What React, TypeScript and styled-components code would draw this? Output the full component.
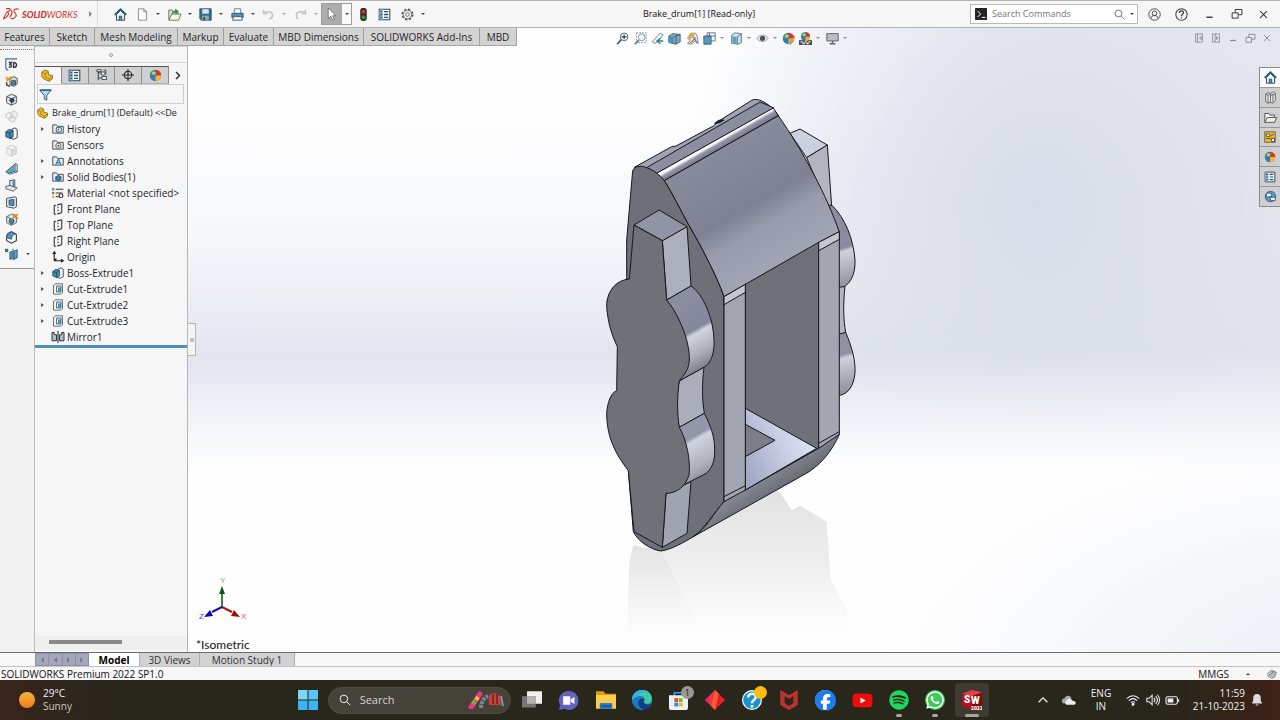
import React, { ReactNode, useState } from "react";
import styled, { createGlobalStyle, css } from "styled-components";
import { FaFacebook, FaSpotify, FaWhatsapp, FaYoutube } from "react-icons/fa6";

const GlobalStyle = createGlobalStyle`
  *, *::before, *::after { box-sizing: border-box; }
  body {
    margin: 0;
    background: #f6f6f6;
    color: #262626;
    font-family: "Open Sans", "Noto Sans", sans-serif;
    font-size: 10px;
    line-height: 16px;
  }
  button, input {
    font: inherit;
    color: inherit;
    background: none;
    border: 0;
    padding: 0;
    margin: 0;
  }
  ul { list-style: none; margin: 0; padding: 0; }
`;

/* ---------- icons ---------- */

const Svg = styled.svg<{ $size: number }>`
  display: block;
  flex: none;
  width: ${(p) => p.$size}px;
  height: ${(p) => p.$size}px;
  overflow: visible;
`;

type IconName =
  | "home" | "new" | "open" | "save" | "print" | "undo" | "redo" | "cursor" | "traffic" | "list" | "gear"
  | "search" | "user" | "help" | "minimize" | "restore" | "close" | "dockLeft" | "dockRight" | "terminal"
  | "zoomFit" | "zoomArea" | "prevView" | "section" | "dynamic" | "orient" | "display" | "eye" | "ball" | "brushBall" | "scene" | "monitor"
  | "three" | "sketchCube" | "hole" | "ghostCubes" | "extrude" | "ghostCube" | "rib" | "draft" | "shell" | "wizard" | "fillet" | "mirrorFeat"
  | "part" | "tree" | "target" | "filter" | "history" | "sensors" | "annotations" | "bodies" | "material" | "plane" | "origin" | "cut" | "mirror"
  | "library" | "folder" | "palette" | "forum" | "tag"
  | "start" | "taskview" | "chat" | "explorer" | "edge" | "store" | "diamond" | "quick" | "mcafee" | "solidworks"
  | "chevronUp" | "cloud" | "wifi" | "volume" | "battery" | "bell";

const dark = { stroke: "#3c4650", fill: "none", strokeWidth: 1.2 } as const;

const folderBase = (
  <path d="M1 13.5V2.5h5l1.500 2H15v9z" fill="#ececec" stroke="#46505a" strokeWidth="1.300" />
);

const ball = (
  <>
    <circle cx="8" cy="8" r="7" fill="#3577c4" />
    <path d="M8 8V1a7 7 0 0 0-7 7z" fill="#3f9a4e" />
    <path d="M8 8V1a7 7 0 0 1 7 7z" fill="#d8342c" />
    <path d="M8 8h7a7 7 0 0 1-7 7z" fill="#f0b92c" />
    <ellipse cx="6" cy="5" rx="2.500" ry="2" fill="#fff" opacity=".55" />
  </>
);

const cubeOutline = (
  <path d="M2 4.500 8 1.500l6 2.500v8L8 15l-6-3zM2 4.500 8 7l6-3M8 7v8" />
);

const icons: Record<IconName, ReactNode> = {
  home: (
    <>
      <path d="M3 8v7h10V8L8 3z" fill="#eef3f6" stroke="#33414c" strokeWidth="1.200" />
      <path d="M6.500 15v-5h3v5" fill="#4e90b0" stroke="#33414c" />
      <path d="M.8 8.500 8 1.500l7.200 7" fill="none" stroke="#255d7d" strokeWidth="2.200" />
    </>
  ),
  new: <path d="M3 1h6.500L13 4.500V15H3zM9.500 1v3.500H13" fill="#fdfdfd" stroke="#7b7b7b" />,
  open: (
    <>
      <path d="M1 14V2.500h4l1.500 2H12V14z" fill="#efe9cf" stroke="#5a5a4c" />
      <path d="M1 15 4.500 7.500H16L13 15z" fill="#f7f7ee" stroke="#5a5a4c" />
      <path d="M4 9C4 5 6 3 9 3V.5l4.500 4L9 8V5.500C7 5.500 5 6.500 4 9z" fill="#3f8a3c" />
    </>
  ),
  save: (
    <>
      <path d="M1 1h14v14H3l-2-2z" fill="#2f6f94" stroke="#2b4656" />
      <path d="M4 1.500h8V7H4z" fill="#dbe7ee" />
      <path d="M4 9.500h8V15H4z" fill="#9aa7af" />
      <path d="M5.500 11h2v4h-2z" fill="#24485c" />
    </>
  ),
  print: (
    <>
      <path d="M4 1h8v6H4z" fill="#fff" stroke="#55616b" />
      <path d="M1 6.500h14v5H1z" fill="#4f95b7" stroke="#27536b" />
      <path d="M3 10.500h10l1 4.500H2z" fill="#f3f5f6" stroke="#3f4b54" />
    </>
  ),
  undo: <path d="M2 2v5h5M2.500 6.500C6 3 13 4 13 9c0 2.500-2 4-4 4.500" fill="none" stroke="#c6c6c6" strokeWidth="2" />,
  redo: <path d="M14 2v5H9M13.500 6.500C10 3 3 4 3 9c0 2.500 1 4 2 4.500" fill="none" stroke="#c6c6c6" strokeWidth="2" />,
  cursor: <path d="M4 0v13l3.200-2.700L9.500 15l2-1-2.200-4.500h4.200z" fill="#fff" stroke="#555" strokeWidth=".8" />,
  traffic: (
    <>
      <rect x="4" y="0" width="8" height="16" rx="3" fill="#2d2a28" />
      <circle cx="8" cy="4.500" r="2.500" fill="#d8342c" />
      <circle cx="8" cy="11.500" r="2.500" fill="#2f9a43" />
    </>
  ),
  list: (
    <>
      <path d="M1.500 1.500h13v13h-13z" fill="#fbfdfe" stroke="#2f4453" strokeWidth="1.300" />
      <path d="M2 2h4v12H2z" fill="#8cbcd3" />
      <path d="M3 4.500h2M3 8h2M3 11.500h2M7.500 4.500h5M7.500 8h5M7.500 11.500h5" stroke="#24506b" strokeWidth="1.600" />
    </>
  ),
  gear: (
    <>
      <circle cx="8" cy="8" r="6.500" fill="none" stroke="#555" strokeWidth="1.800" strokeDasharray="2.900 2.200" />
      <circle cx="8" cy="8" r="5.200" fill="#f6f6f6" stroke="#555" />
      <circle cx="8" cy="8" r="2.300" fill="none" stroke="#555" />
    </>
  ),
  search: <path d="M10.500 10.500 15 15M6.500 1.500a5 5 0 1 0 0 10 5 5 0 0 0 0-10z" fill="none" stroke="currentColor" strokeWidth="1.300" />,
  user: (
    <g fill="none" stroke="#4a4a4a" strokeWidth="1.200">
      <circle cx="8" cy="8" r="7" />
      <circle cx="8" cy="6.500" r="2.800" />
      <path d="M3.500 13c.5-3 2-3.700 4.500-3.700s4 .7 4.500 3.700" />
    </g>
  ),
  help: (
    <g fill="none" stroke="#3c3c3c" strokeWidth="1.300">
      <circle cx="8" cy="8" r="7" />
      <path d="M5.500 6.200c0-3.600 5-3.400 5-.4 0 2-2.500 2-2.500 4.200M8 11.300v1.400" strokeWidth="1.500" />
    </g>
  ),
  minimize: <path d="M3.500 12h9" stroke="currentColor" strokeWidth="2" />,
  restore: <path d="M1.500 6.500h8v7h-8zM5.500 6V2h9v7h-4.500" fill="none" stroke="currentColor" strokeWidth="1.300" />,
  close: <path d="m2 2 12 12M14 2 2 14" stroke="currentColor" strokeWidth="1.800" />,
  dockLeft: <path d="M2.500 1.500h11v13h-11zM5.500 1.500v13M11.500 5.500 8.500 8l3 2.500z" fill="none" stroke="currentColor" strokeWidth="1.300" />,
  dockRight: <path d="M2.500 1.500h11v13h-11zM6.500 1.500v13M8.500 5.500l3 2.500-3 2.500z" fill="none" stroke="currentColor" strokeWidth="1.300" />,
  terminal: (
    <>
      <rect width="16" height="16" rx="1" fill="#252525" />
      <path d="m3.500 4 4 4-4 4M9 12.500h5" fill="none" stroke="#fff" strokeWidth="1.300" />
    </>
  ),
  zoomFit: (
    <>
      <circle cx="10" cy="6" r="4.700" fill="#f3f7fa" stroke="#5d6a75" strokeWidth="1.200" />
      <path d="M10 3v6M7 6h6" stroke="#2b3a46" strokeWidth="1.300" />
      <path d="m6.500 9.500-5 5.500" stroke="#39657e" strokeWidth="2.200" />
    </>
  ),
  zoomArea: (
    <>
      <path d="M3 1h12v12H3z" fill="none" stroke="#6f7a83" strokeDasharray="2 1.500" />
      <circle cx="9.500" cy="6.500" r="4.200" fill="#f0f4f7" stroke="#8b969f" strokeWidth="1.200" />
      <path d="m6 10-5 5" stroke="#56809a" strokeWidth="2" />
    </>
  ),
  prevView: (
    <>
      <path d="M1.500 12 11 1.500l4 2L9 11l-4 3z" fill="#eef1f3" stroke="#6b757d" />
      <path d="M15 11H8.500m3-3-4 3 4 3.500" fill="none" stroke="#2f7ca2" strokeWidth="1.800" />
    </>
  ),
  section: (
    <>
      <path d="M1 5 6 2l9 1v9l-5 3-9-2z" fill="#85a9bd" stroke="#36505f" />
      <path d="M1 5l6 1v8l-6-1z" fill="#4c93b8" />
      <path d="M10 6v9M7 6l8-3" stroke="#36505f" />
    </>
  ),
  dynamic: (
    <>
      <path d="M2 8 6 1.500h6L14 6l1 8-4-3-4 4-5-1 3-4z" fill="#eceded" stroke="#7b7267" />
      <path d="M4 6 6 1.500h5L9 6l-5 4z" fill="#eda438" />
      <path d="m9 6 5 8M12 7l-7 7" stroke="#6f7f8a" strokeWidth="1.500" />
    </>
  ),
  orient: (
    <>
      <path d="M5 1h10v10H5z" fill="#f4f7f9" stroke="#51606b" />
      <path d="M8 1v10M5 5h10" stroke="#51606b" />
      <path d="M1 5h9v10H1z" fill="#569abb" stroke="#2c5a73" />
    </>
  ),
  display: (
    <>
      <path d="M2 4 6 1l8 1v11l-4 2-8-1z" fill="#cfe0e9" stroke="#466273" />
      <path d="M3 5l5 1v8l-5-1z" fill="#5ca2c3" />
      <path d="M9 6v9M9 6l5-3.500" stroke="#466273" />
    </>
  ),
  eye: (
    <>
      <path d="M1 8c3-5.500 11-5.500 14 0-3 5-11 5-14 0z" fill="#e6e8ea" stroke="#9a9fa4" />
      <circle cx="8" cy="7.800" r="3.200" fill="#4a545c" />
    </>
  ),
  ball,
  brushBall: (
    <>
      {ball}
      <path d="m10 15.500 5-7 .5-3.500-4 4z" fill="#d6b27b" stroke="#8a704a" strokeWidth=".6" />
    </>
  ),
  scene: (
    <>
      <path d="M0 10h16v6H0z" fill="#4a4a4a" />
      <path d="M2 11h2v2H2zM7 11h2v2H7zM12 11h2v2h-2zM4 13h3v2H4zM9 13h3v2H9z" fill="#e8e8e8" />
      <g transform="translate(1.600 -.5) scale(.8)">{ball}</g>
    </>
  ),
  monitor: (
    <>
      <path d="M1 2h14v9H1z" fill="#b7bdc6" stroke="#5c626b" strokeWidth="1.200" />
      <path d="M8 11v3M4.500 14.500h7" stroke="#5c626b" strokeWidth="1.800" />
    </>
  ),
  three: (
    <>
      <path d="M15 1H1v10c0 2.500 1 4 3 4" fill="none" stroke="#2c759c" strokeWidth="1.400" />
      <path d="M4.500 5.500h3.500L6 8c3 0 2.500 4-1.500 3M10.500 5.500v6c5 0 5-6 0-6" fill="none" stroke="#333" strokeWidth="1.700" />
    </>
  ),
  sketchCube: (
    <>
      <path d="M6 4 11 2l4 2v7l-4 3-5-2z" fill="#cddbe3" stroke="#3c4650" />
      <path d="M8 7h5v5H8z" fill="#3f86a8" stroke="#24485c" />
      <path d="m1 2 7 6M7 2 2 8M1 5h7" stroke="#e39a1d" strokeWidth="1.600" />
      <path d="M2 9v3l4 2" stroke="#333" fill="none" strokeWidth="1.600" />
    </>
  ),
  hole: (
    <>
      <g fill="#dfe3e5" stroke="#555c62" strokeWidth="1.200">{cubeOutline}</g>
      <circle cx="8.500" cy="9" r="3" fill="#333c43" />
    </>
  ),
  ghostCubes: (
    <g fill="#efefef" stroke="#c3c3c3">
      <path d="M1 5l4-2 4 2v4l-4 2-4-2zM7 3l4-2 4 2v5l-4 2-4-2zM5 10l4-2 4 2v3l-4 2-4-2z" />
    </g>
  ),
  extrude: (
    <>
      <path d="M8 3 12 1l3 2v10l-4 2-4-1z" {...dark} fill="#f4f6f7" />
      <path d="M1 6 5 3l5 1.500V12l-4 2-5-2z" fill="#3f8db3" stroke="#1f4456" />
      <path d="M1 6l5 1.500V14M6 7.500l4-3" fill="none" stroke="#1f4456" />
    </>
  ),
  ghostCube: (
    <>
      <g fill="#f0f0f0" stroke="#c9c9c9">{cubeOutline}</g>
      <circle cx="11" cy="10" r="2.500" fill="#e3e3e3" stroke="#c9c9c9" />
    </>
  ),
  rib: (
    <>
      <path d="M1 12 13 2v9l-9 3z" fill="#62a5c4" stroke="#26485a" />
      <path d="m13 2 2 1v9l-2-1M4 14l2 1 9-3" fill="#e6ecef" stroke="#26485a" />
    </>
  ),
  draft: (
    <>
      <path d="M6 2l6-1v9l-6 1z" {...dark} fill="#eef2f4" />
      <path d="M9 3l3-2v9l-3 1z" fill="#4f95b7" />
      <path d="M1 9l5-1 9 3-5 4-9-3z" fill="#dfe5e9" stroke="#3c4650" />
    </>
  ),
  shell: (
    <>
      <path d="M2 3l10-2 2 1v11l-3 2-9-2z" fill="#f1f4f5" stroke="#3c4650" strokeWidth="1.200" />
      <path d="M5 5l6-1v8l-6-1z" fill="#4a90b4" stroke="#24485c" />
    </>
  ),
  wizard: (
    <>
      <g fill="#dde3e6" stroke="#4a5259">{cubeOutline}</g>
      <circle cx="8" cy="10" r="3" fill="#3f86a8" stroke="#24485c" />
      <path d="m8 8 5-6M10 1l2 2 3-1-1 3 2 2" stroke="#e8891a" strokeWidth="1.600" fill="none" />
    </>
  ),
  fillet: (
    <>
      <path d="M2 8c0-4 2-6 6-7l6 3v8l-6 3-6-3z" fill="#f4f6f7" stroke="#2e3a43" strokeWidth="1.300" />
      <path d="M2 8c0-4 2-6 6-7l5 2.500C9.500 4.500 8 6.500 8 10z" fill="#4c95b9" stroke="#24485c" />
    </>
  ),
  mirrorFeat: (
    <>
      <path d="M6 5l3-1v9l-3 1zM11 4l4-2v10l-4 2z" fill="#62a5c4" stroke="#26485a" />
      <path d="M10 1v14" stroke="#2a78a5" strokeWidth="1.400" />
      <path d="M0 1h4v4H0z" fill="#2a78a5" />
    </>
  ),
  part: (
    <>
      <path d="M1 4 5 1l4 2v4l5 1v4l-4 3-7-3-2-3z" fill="#f2be2b" stroke="#7d5d0b" />
      <path d="M1 4l4 2 4-3M5 6v4l5 2 4-3M10 12v3" fill="none" stroke="#9c7410" />
    </>
  ),
  tree: (
    <g {...dark}>
      <path d="M3 15V1M3 5h5M3 12h5" strokeWidth="1.500" />
      <path d="M1 1h6v2.500H1zM7 4h5v4H7zM8 10h6v4H8z" fill="#f6f6f6" />
      <path d="M10 1.500h3v6" />
    </g>
  ),
  target: (
    <g fill="none" stroke="#222" strokeWidth="1.400">
      <circle cx="8" cy="8" r="5" />
      <path d="M8 0v16M0 8h16" />
    </g>
  ),
  filter: (
    <>
      <path d="M1 3h14L9.500 9v6l-3-1.500V9z" fill="#b9d4e2" stroke="#2c5a73" strokeWidth="1.200" />
      <path d="M1 2.500h14" stroke="#2a6b91" strokeWidth="2" />
    </>
  ),
  history: (
    <>
      {folderBase}
      <circle cx="9" cy="9" r="3.500" fill="#fff" stroke="#2f7ca2" strokeWidth="1.400" />
      <path d="M9 7v2.500H7" fill="none" stroke="#333" />
    </>
  ),
  sensors: (
    <>
      {folderBase}
      <circle cx="8.500" cy="9" r="3.500" fill="#fff" stroke="#6e3f4b" strokeWidth="1.200" />
      <circle cx="8.500" cy="9" r="1.300" fill="#333" />
    </>
  ),
  annotations: (
    <>
      {folderBase}
      <path d="M5 13 8.500 5.500 12 13M6 10.500h5" fill="none" stroke="#2a78a5" strokeWidth="1.500" />
    </>
  ),
  bodies: (
    <>
      {folderBase}
      <path d="M5 7.500 8.500 6l3.500 1.500v4L8.500 13 5 11.500z" fill="#2f86ae" stroke="#1f4456" />
    </>
  ),
  material: (
    <>
      <path d="M5 3h10M5 8h9M5 13h5" stroke="#333" strokeWidth="1.500" />
      <path d="M0 1.500h3v3H0z" fill="#3f9a4e" />
      <path d="M0 6.500h3v3H0z" fill="#777" />
      <path d="M0 11.500h3v3H0z" fill="#e5b527" />
      <circle cx="12" cy="11.500" r="2.500" fill="#fff" stroke="#333" strokeWidth="1.500" />
    </>
  ),
  plane: (
    <g fill="none" stroke="#2c2c2c" strokeWidth="1.400">
      <path d="M3 3v12M3 15h2.500M3 3h2.500M13 1v12" />
      <path d="M7 2.500 13 1M7 14.500 13 13M8 5v2M8 9v2" />
    </g>
  ),
  origin: <path d="M3 1v12h12M1 4l2-3 2 3M12 11l3 2-3 2M3 13l3-3" fill="none" stroke="#222" strokeWidth="1.500" />,
  cut: (
    <>
      <path d="M2 3l3-2h9v12l-3 2H2z" fill="#f2f4f5" stroke="#5a636b" strokeWidth="1.200" />
      <path d="M6 4h6v8H6z" fill="#dbe8ee" stroke="#2c4a5a" />
      <path d="M8 6h4v6H8z" fill="#4a93b6" />
    </>
  ),
  mirror: (
    <>
      <path d="M0 2v11h6V5H3V2zM16 2v11h-6V5h3V2z" fill="#a8c3d1" stroke="#222" strokeWidth="1.200" />
      <path d="M8 0v16" stroke="#222" strokeWidth="1.400" />
    </>
  ),
  library: (
    <path d="M2 4l3-2 3 1 3-2 3 2v9l-3 3-3-1-3 1-3-2zM2 4l3 1v10M5 5l3-2v11M8 6l3-2v10M11 5l3-2" fill="#e6e6e6" stroke="#555" />
  ),
  folder: <path d="M1 14V3h5l1.500 2H13v3h2.500L13 14zM1 14l3-6h9" fill="#f0f0ea" stroke="#555" strokeWidth="1.200" />,
  palette: (
    <>
      <path d="M1 1h14v14H1z" fill="#e7b93c" stroke="#5a4a1b" />
      <path d="M3 4h5v3H3zM3 10h6M9 7l4-3M10 10h4v4h-4z" fill="#fff" stroke="#3d3310" />
    </>
  ),
  forum: (
    <>
      <circle cx="8" cy="8" r="6.500" fill="#5b97c8" stroke="#28588a" />
      <path d="M3 4h6v4H6L4 10V8H3zM8 9h6v4H8z" fill="#eaf3f9" stroke="#28445a" strokeWidth=".8" />
    </>
  ),
  tag: (
    <>
      <path d="M1 7 7 2l8 3-2 7-5 3-6-3z" fill="#d8d8d8" stroke="#555" />
      <path d="m3 8 8 5M5 6l8 4M7 4l7 3M3 11l8-8" stroke="#666" />
    </>
  ),
  start: (
    <g fill="#3cb4f4">
      <path d="M0 0h7.600v7.600H0z" fill="#7fd4fb" />
      <path d="M8.400 0H16v7.600H8.400z" fill="#58c4f8" />
      <path d="M0 8.400h7.600V16H0zM8.400 8.400H16V16H8.400z" />
    </g>
  ),
  taskview: (
    <>
      <path d="M4 1h12v10H4z" fill="#efefef" />
      <path d="M0 5h11v9H0z" fill="#77756f" />
      <path d="M4 5h7v6H4z" fill="#b5b4b0" />
    </>
  ),
  chat: (
    <>
      <path d="M8 0a8 8 0 1 1-3.500 15L0 16l1-4A8 8 0 0 1 8 0z" fill="#6263c0" />
      <path d="M3.500 4.500h6v7h-6zM10 7l3-2v6l-3-2z" fill="#fff" />
    </>
  ),
  explorer: (
    <>
      <path d="M0 1h6l1.500 2H16v4H0z" fill="#e29a16" />
      <path d="M0 4h16v11H0z" fill="#fbcf4d" />
      <path d="M3 10.500h10V15H3z" fill="#1f76c9" />
      <path d="M4.500 13h7" stroke="#0f4f91" />
    </>
  ),
  edge: (
    <>
      <circle cx="8" cy="8" r="8" fill="#1b77cc" />
      <path d="M0 8C0 3 4 0 8 0c5 0 8 3.500 8 7 0 3-2 4-4 4-2.500 0-3-1.200-2.400-2C10.500 7.500 9.500 5 6.500 5 3 5 1 6.500 0 8z" fill="#3ec9a7" />
      <path d="M0 8C0 3 4 0 8 0c2 0 4 .6 5.500 2C9 1 5 3 3.500 5.600 2 6 1 6.800 0 8z" fill="#35b3e6" />
      <path d="M6 7.500C4 9 5 14 9 15.700 5 16.500 1 13 .2 9.500 1 6 4 5 6.500 5 8.500 5 9.800 6 10 7.200 8.500 6.500 7 6.700 6 7.500z" fill="#1b77cc" />
      <path d="M6 7.500c1-.8 2.500-1 4-.3.200 1-.6 1.500-.6 2.300 0 2 3.600 2.500 5.600 1.500-1 2.500-3.500 4.800-6 4.700C5 14 4 9 6 7.500z" fill="#12407f" />
    </>
  ),
  store: (
    <>
      <path d="M4.500 4V1.500h7V4" fill="none" stroke="#3aa0dc" strokeWidth="1.400" />
      <path d="M0 3.500h16V14c0 1-.8 2-2 2H2c-1.200 0-2-1-2-2z" fill="#eef2f5" />
      <path d="M4.500 6h3.200v3.200H4.500z" fill="#e5502a" />
      <path d="M8.300 6h3.200v3.200H8.300z" fill="#7cb82f" />
      <path d="M4.500 9.800h3.200V13H4.500z" fill="#1d9be0" />
      <path d="M8.300 9.800h3.200V13H8.300z" fill="#f8b61b" />
    </>
  ),
  diamond: (
    <>
      <path d="M8 0 0 8l8 8z" fill="#f0363f" />
      <path d="m8 0 8 8-8 8z" fill="#e2202a" />
      <path d="m8 0 3 3-3 13-3-3z" fill="#fb5a2c" />
      <path d="m0 8 3-3v6z" fill="#e5178f" />
    </>
  ),
  quick: (
    <>
      <circle cx="8" cy="8" r="8" fill="#fff" />
      <circle cx="8" cy="8" r="7" fill="#1793d1" />
      <path d="M5 6c0-4 6-4 6-.5C11 8 8 8 8 10.500M8 12v2" fill="none" stroke="#fff" strokeWidth="2" />
    </>
  ),
  mcafee: <path d="M1 0l7 4 7-4v12l-7 4-7-4zM4.500 5v5.500L8 12.500l3.500-2V5L8 7z" fill="#bf3131" fillRule="evenodd" />,
  solidworks: (
    <>
      <path d="M0 3 8 0l8 2v11l-8 3-8-3z" fill="#b1121b" />
      <path d="M0 3 8 0l8 2-8 3z" fill="#e2414a" />
      <path d="M8 5v11l8-3V2z" fill="#7d0b12" />
    </>
  ),
  chevronUp: <path d="m3 10.500 5-5 5 5" fill="none" stroke="#e8e8e8" strokeWidth="1.500" />,
  cloud: (
    <>
      <path d="M3 12a3 3 0 0 1 0-6c1-4 7-4 8 0z" fill="#a9a9a9" />
      <path d="M5 13.500a3 3 0 0 1 0-5c2-3 6-2 7 .3 5 0 4.500 4.700 1 4.700z" fill="#f0f0f0" />
    </>
  ),
  wifi: (
    <g fill="none" stroke="#eee" strokeWidth="1.300">
      <path d="M1 6.500c4-4.500 10-4.500 14 0M3.300 8.800c3-3 6.400-3 9.400 0M5.700 11c1.500-1.300 3.100-1.300 4.600 0" />
      <circle cx="8" cy="13" r="1" fill="#eee" />
    </g>
  ),
  volume: (
    <path d="M1 6h2.500L7 2.500v11L3.500 10H1zM9 5.500c1.500 1.500 1.500 3.500 0 5M11 3.500c2.500 2.700 2.500 6.300 0 9M13 2c3.300 3.500 3.300 8.500 0 12" fill="none" stroke="#eee" strokeWidth="1.200" />
  ),
  battery: (
    <>
      <rect x="0" y="3.500" width="14" height="9" rx="2" fill="none" stroke="#eee" strokeWidth="1.300" />
      <path d="M2 5.500h7v5H2z" fill="#eee" />
      <path d="M15.500 6.500v3" stroke="#eee" strokeWidth="1.500" />
    </>
  ),
  bell: <path d="M8 0c3.500 0 5 2.500 5 5v4l2 3.500H1L3 9V5c0-2.500 1.500-5 5-5zM6 14h4c-.5 2-3.500 2-4 0z" fill="#dcdcdc" />,
};

const Icon = ({ name, size = 12 }: { name: IconName; size?: number }) => (
  <Svg $size={size} viewBox="0 0 16 16" aria-hidden="true">
    {icons[name]}
  </Svg>
);

const Caret = styled.span<{ $color?: string; $up?: boolean }>`
  flex: none;
  border: 2px solid transparent;
  ${(p) => (p.$up ? "border-bottom-color" : "border-top-color")}: ${(p) => p.$color ?? "#444"};
  ${(p) => (p.$up ? "border-top" : "border-bottom")}: 0;
`;

/* ---------- title bar ---------- */

const Page = styled.div`
  display: flex;
  flex-direction: column;
  min-height: 100vh;
  overflow: hidden;
`;

const TitleBar = styled.header`
  display: grid;
  grid-template-columns: 428px 1fr auto;
  align-items: center;
  height: 28px;
  background: #f6f6f6;
  border-top: 1px solid #b4b4b4;
  border-bottom: 1px solid #b0b0b0;
`;

const TitleLeft = styled.div`
  display: flex;
  align-items: center;
  height: 26px;
`;

const Brand = styled.div`
  display: flex;
  align-items: center;
  gap: 2px;
  width: 98px;
  height: 26px;
  padding-left: 3px;
  border-right: 1px solid #dcdcdc;
  color: #d5322e;
  font: italic 9px "Lato", sans-serif;
  b { font-weight: 900; }
`;

const BrandArrow = styled.span`
  margin-left: auto;
  margin-right: 5px;
  border: 3px solid transparent;
  border-left-color: #8a8a8a;
  border-right: 0;
`;

const QuickTools = styled.div`
  display: flex;
  align-items: center;
  flex: 1;
  padding-left: 16px;
`;

const Tool = styled.button<{ $w: number; $active?: boolean }>`
  display: flex;
  align-items: center;
  gap: 7px;
  flex: none;
  width: ${(p) => p.$w}px;
  height: 22px;
  ${(p) =>
    p.$active &&
    css`
      padding: 0 3px;
      margin-right: 5px;
      border: 1px solid #9c9c9c;
      background: linear-gradient(to right, #adadad 20px, #fafafa 20px);
    `}
`;

const DocTitle = styled.h1`
  margin: 0;
  text-align: center;
  font-size: 9px;
  font-weight: 400;
  color: #111;
`;

const TitleRight = styled.div`
  display: flex;
  align-items: center;
  padding-right: 12px;
  color: #333;
`;

const SearchBox = styled.label`
  display: flex;
  align-items: center;
  gap: 5px;
  width: 168px;
  height: 20px;
  padding: 0 3px 0 4px;
  margin-right: 10px;
  background: #fff;
  border: 1px solid #b9b9b9;
  color: #666;
  input {
    flex: 1;
    min-width: 0;
    outline: 0;
    font-size: 9px;
  }
  input::placeholder { color: #777; opacity: 1; }
`;

const IconButton = styled.button<{ $gap?: number }>`
  display: grid;
  place-items: center;
  margin-left: ${(p) => p.$gap ?? 0}px;
`;

const DassaultMark = () => (
  <svg width="17" height="14" viewBox="0 0 54 42" fill="none" stroke="#d5322e" strokeWidth="3.500" aria-hidden="true">
    <path d="M10 4h10c6 0 3 7-7 11 9 2 5 14-11 21 2-8 5-13 9-17" />
    <path d="M50 6c-8-3-17 0-15 7 2 5 10 8 6 16-4 6-12 8-18 5" />
    <path d="M27 8c3 8 1 16-6 22" />
  </svg>
);

const quickTools: { icon: IconName; w: number; caret?: "dark" | "pale"; active?: boolean; label: string }[] = [
  { icon: "home", w: 22, label: "Home" },
  { icon: "new", w: 32, caret: "dark", label: "New" },
  { icon: "open", w: 31, caret: "dark", label: "Open" },
  { icon: "save", w: 32, caret: "dark", label: "Save" },
  { icon: "print", w: 31, caret: "dark", label: "Print" },
  { icon: "undo", w: 32, caret: "pale", label: "Undo" },
  { icon: "redo", w: 27, caret: "pale", label: "Redo" },
  { icon: "cursor", w: 31, caret: "dark", active: true, label: "Select" },
  { icon: "traffic", w: 21, label: "Rebuild" },
  { icon: "list", w: 23, label: "File properties" },
  { icon: "gear", w: 26, caret: "dark", label: "Options" },
];

/* ---------- workspace ---------- */

const Workspace = styled.main`
  flex: 1;
  display: flex;
  flex-direction: column;
  background:
    radial-gradient(ellipse 40% 40% at 108% 104%, #eceef5 0%, rgba(240, 241, 247, 0) 100%),
    linear-gradient(to bottom, transparent 52%, rgba(255, 255, 255, 0.4) 60%, #fefefe 71%),
    radial-gradient(ellipse 28% 66% at 81% 28%, #d8dce8 0%, rgba(218, 222, 234, 0.75) 40%, rgba(227, 230, 239, 0) 100%),
    linear-gradient(to right, rgba(226, 229, 238, 0) 70%, rgba(226, 229, 238, 0.8) 100%),
    linear-gradient(to bottom, #fefefe 12%, #f6f7fa 34%, #dfe3ed 55%, #e4e7f0 62%);
`;

const CommandRow = styled.div`
  display: flex;
  align-items: flex-start;
  height: 18px;
`;

const CommandTabs = styled.nav`
  display: flex;
  height: 18px;
  background: #d3d3d3;
  border-bottom: 1px solid #a6a6a6;
`;

const CommandTab = styled.button<{ $w: number }>`
  width: ${(p) => p.$w}px;
  white-space: nowrap;
  line-height: 16px;
  border-right: 1px solid #a0a0a0;
`;

const commandTabs: [string, number][] = [
  ["Features", 50], ["Sketch", 45], ["Mesh Modeling", 83], ["Markup", 46], ["Evaluate", 50],
  ["MBD Dimensions", 90], ["SOLIDWORKS Add-Ins", 116], ["MBD", 37],
];

const ViewTools = styled.div`
  display: flex;
  align-items: center;
  height: 20px;
  margin-left: 99px;
`;

const ViewTool = styled.button<{ $w: number }>`
  display: flex;
  align-items: center;
  gap: 4px;
  width: ${(p) => p.$w}px;
`;

const viewTools: [IconName, number, boolean, string][] = [
  ["zoomFit", 18, false, "Zoom to fit"], ["zoomArea", 17, false, "Zoom to area"], ["prevView", 17, false, "Previous view"],
  ["section", 18, false, "Section view"], ["dynamic", 17, false, "Dynamic annotation"], ["orient", 27, true, "View orientation"],
  ["display", 26, true, "Display style"], ["eye", 26, true, "Hide and show items"], ["brushBall", 17, false, "Edit appearance"],
  ["scene", 27, true, "Apply scene"], ["monitor", 26, true, "View settings"],
];

const DocControls = styled.div`
  display: flex;
  align-items: center;
  gap: 7px;
  height: 20px;
  margin-left: auto;
  padding-right: 9px;
  color: #84888f;
`;

const WorkRow = styled.div`
  flex: 1;
  display: flex;
  min-height: 0;
`;

const SideColumn = styled.aside`
  width: 35px;
  background: #f2f2f2;
  border-right: 1px solid #bcbcbc;
`;

const SideTools = styled.div`
  display: flex;
  flex-direction: column;
  height: 220px;
  padding: 6px 5px 5px;
  margin-top: 3px;
  background: #f6f6f6;
  border-top: 1px dotted #777;
  border-bottom: 1px solid #9a9096;
`;

const SideTool = styled.button`
  display: flex;
  align-items: center;
  justify-content: space-between;
  flex: 1;
  margin-right: -1px;
`;

const sideTools: IconName[] = [
  "three", "sketchCube", "hole", "ghostCubes", "extrude", "ghostCube", "rib", "draft", "shell", "wizard", "fillet", "mirrorFeat",
];

const FeaturePanel = styled.section`
  display: flex;
  flex-direction: column;
  width: 153px;
  background: #f6f6f6;
  border-right: 1px solid #b5b5b5;
`;

const gripDot = css`
  &::after {
    content: "";
    width: 4px;
    height: 4px;
    border: 1px solid #999;
    border-radius: 50%;
  }
`;

const Grip = styled.div`
  display: grid;
  place-items: center;
  height: 17px;
  margin-bottom: 3px;
  border-top: 1px solid #d0d0d0;
  border-bottom: 1px solid #d6d6d6;
  ${gripDot}
`;

const PanelTabs = styled.div`
  display: flex;
  height: 18px;
`;

const PanelTab = styled.button<{ $active?: boolean }>`
  display: grid;
  place-items: center;
  width: 27px;
  border-top: 1px solid #555;
  border-right: 1px solid #8d8d8d;
  border-bottom: 1px solid ${(p) => (p.$active ? "#f6f6f6" : "#b0b0b0")};
  background: ${(p) => (p.$active ? "#f6f6f6" : "#d0d0d0")};
`;

const MoreTabs = styled.button`
  display: grid;
  place-items: center;
  width: 18px;
  color: #333;
`;

const FilterBox = styled.label`
  display: flex;
  align-items: center;
  height: 20px;
  margin: 0 3px 1px 2px;
  padding: 0 1px;
  border: 1px solid #cfcfcf;
  input { flex: 1; min-width: 0; outline: 0; }
`;

const Tree = styled.ul`
  border-bottom: 3px solid #4a90bb;
  overflow: hidden;
  color: #1e1e2a;
`;

const Row = styled.li<{ $root?: boolean }>`
  display: flex;
  align-items: center;
  gap: 3px;
  height: 16px;
  padding-left: ${(p) => (p.$root ? 2 : 4)}px;
  font-size: ${(p) => (p.$root ? 9 : 10)}px;
  white-space: nowrap;
`;

const Expander = styled.button<{ $hidden: boolean }>`
  width: 10px;
  height: 12px;
  visibility: ${(p) => (p.$hidden ? "hidden" : "visible")};
  &::before {
    content: "";
    display: block;
    width: 0;
    margin-left: 2px;
    border: 2px solid transparent;
    border-left: 3px solid #555;
    border-right: 0;
  }
`;

const features: [string, IconName, boolean][] = [
  ["History", "history", true], ["Sensors", "sensors", false], ["Annotations", "annotations", true],
  ["Solid Bodies(1)", "bodies", true], ["Material <not specified>", "material", false], ["Front Plane", "plane", false],
  ["Top Plane", "plane", false], ["Right Plane", "plane", false], ["Origin", "origin", false],
  ["Boss-Extrude1", "extrude", true], ["Cut-Extrude1", "cut", true], ["Cut-Extrude2", "cut", true],
  ["Cut-Extrude3", "cut", true], ["Mirror1", "mirror", false],
];

const PanelScroll = styled.div`
  margin-top: auto;
  height: 14px;
  margin-bottom: 2px;
  padding: 4px 0 0 14px;
  background: #efefef;
  &::after {
    content: "";
    display: block;
    width: 73px;
    height: 4px;
    background: #8a8a8a;
  }
`;

/* ---------- graphics area ---------- */

const Canvas = styled.section`
  position: relative;
  flex: 1;
  min-width: 0;
`;

const Model = styled.svg`
  position: absolute;
  inset: 0;
  width: 100%;
  height: 100%;
`;

const PanelHandle = styled.button`
  position: absolute;
  left: 0;
  top: 277px;
  width: 8px;
  height: 33px;
  display: grid;
  place-items: center;
  background: #f4f4f4;
  border: 1px solid #b5b5b5;
  border-left: 0;
  ${gripDot}
`;

const TaskPane = styled.nav`
  position: absolute;
  right: 0;
  top: 21px;
  display: flex;
  flex-direction: column;
  height: 140px;
  border: 1px solid #8a8a8a;
  border-right: 0;
`;

const PaneTab = styled.button<{ $active?: boolean }>`
  display: grid;
  place-items: center;
  flex: 1;
  width: 20px;
  background: ${(p) => (p.$active ? "#fafafa" : "#cfcfcf")};
  & + & { border-top: 1px solid #999; }
`;

const ViewName = styled.div`
  position: absolute;
  left: 8px;
  bottom: 0;
  font-family: "Lato", sans-serif;
  font-size: 12px;
  line-height: 15px;
  color: #111;
`;

const Triad = styled.svg`
  position: absolute;
  left: 8px;
  bottom: 26px;
  width: 52px;
  height: 52px;
  font: 8px "Liberation Sans", sans-serif;
`;

const edge = { stroke: "#16171b", strokeWidth: 3, strokeLinejoin: "round" } as const;

const BrakeDrum = () => (
  <Model viewBox="-1206 -102 3276 1818" preserveAspectRatio="xMidYMid slice" role="img" aria-label="Brake drum model, isometric view">
    <defs>
      <linearGradient id="top" gradientUnits="userSpaceOnUse" x1="223" y1="302" x2="417" y2="642">
        <stop offset="0" stopColor="#888b9c" />
        <stop offset=".5" stopColor="#7e8193" />
        <stop offset=".68" stopColor="#989bac" />
        <stop offset="1" stopColor="#a1a4b3" />
      </linearGradient>
      <linearGradient id="roll" gradientUnits="userSpaceOnUse" x1="200" y1="280" x2="215" y2="306">
        <stop offset="0" stopColor="#fdfdff" />
        <stop offset=".3" stopColor="#fbfbff" />
        <stop offset=".55" stopColor="#9396a7" />
        <stop offset="1" stopColor="#777a8b" />
      </linearGradient>
      <linearGradient id="lobeUpper" gradientUnits="userSpaceOnUse" x1="265" y1="660" x2="369" y2="843">
        <stop offset="0" stopColor="#8b8ea2" />
        <stop offset=".48" stopColor="#84879a" />
        <stop offset=".54" stopColor="#d0d3e0" />
        <stop offset=".8" stopColor="#adb0bc" />
        <stop offset="1" stopColor="#80838e" />
      </linearGradient>
      <linearGradient id="lobeLower" gradientUnits="userSpaceOnUse" x1="265" y1="1042" x2="369" y2="1225">
        <stop offset="0" stopColor="#9699ac" />
        <stop offset=".22" stopColor="#9295a8" />
        <stop offset=".28" stopColor="#d0d3e0" />
        <stop offset=".6" stopColor="#b0b3bf" />
        <stop offset=".85" stopColor="#858893" />
      </linearGradient>
      <linearGradient id="rearUpper" gradientUnits="userSpaceOnUse" x1="720" y1="377" x2="800" y2="630">
        <stop offset="0" stopColor="#8b8e9f" />
        <stop offset=".5" stopColor="#888b9c" />
        <stop offset=".54" stopColor="#cfd2dd" />
        <stop offset="1" stopColor="#83868f" />
      </linearGradient>
      <linearGradient id="rearLower" gradientUnits="userSpaceOnUse" x1="745" y1="757" x2="800" y2="948">
        <stop offset="0" stopColor="#8f92a3" />
        <stop offset=".34" stopColor="#8f92a3" />
        <stop offset=".4" stopColor="#cfd2dd" />
        <stop offset="1" stopColor="#83868f" />
      </linearGradient>
      <linearGradient id="floor" gradientUnits="userSpaceOnUse" x1="466" y1="1180" x2="660" y2="1090">
        <stop offset="0" stopColor="#a2a8c2" />
        <stop offset=".7" stopColor="#cdd2e8" />
        <stop offset="1" stopColor="#d9def0" />
      </linearGradient>
      <linearGradient id="under" gradientUnits="userSpaceOnUse" x1="520" y1="1190" x2="560" y2="1250">
        <stop offset="0" stopColor="#858894" />
        <stop offset="1" stopColor="#656770" />
      </linearGradient>
      <linearGradient id="reflect" x1="0" y1="0" x2="0" y2="1">
        <stop offset="0" stopColor="#d8d8d8" stopOpacity=".75" />
        <stop offset=".5" stopColor="#e4e4e6" stopOpacity=".6" />
        <stop offset="1" stopColor="#f4f4f8" stopOpacity="0" />
      </linearGradient>
      <linearGradient id="reflectDark" x1="0" y1="0" x2="0" y2="1">
        <stop offset="0" stopColor="#d8d8da" stopOpacity=".35" />
        <stop offset="1" stopColor="#e8e8ea" stopOpacity="0" />
      </linearGradient>
    </defs>

    <path d="M130 1395 L213 1413 L340 1352 L565 1230 L605 1290 L630 1277 L710 1325 L722 1500 L770 1590 L790 1690 L110 1690 L118 1450 Z" fill="url(#reflect)" />
    <path d="M213 1413 L300 1580 L340 1690 H112 L118 1450 L130 1395 Z" fill="url(#reflectDark)" />

    {/* rear clamp */}
    <g {...edge}>
      <path d="M600 160 L630 147 L712 195 L650 233 Z" fill="#cdd0e0" />
      <path d="M650 233 L712 195 L725 378 L720 400 Z" fill="#b3b5c2" />
      <path d="M715 375 L727 377 C765 415 790 475 795 540 C797 590 775 620 748 626 Z" fill="url(#rearUpper)" />
      <path d="M740 622 L765 620 C759 670 760 720 767 757 L740 768 Z" fill="#b3b6c3" />
      <path d="M740 765 L767 757 C785 800 797 840 795 880 C790 925 770 945 740 948 Z" fill="url(#rearLower)" />
    </g>

    {/* drum body */}
    <g {...edge}>
      <path d="M133 262 L245 200 L258 198 L370 138 L385 124 L485 61 C505 50 545 75 565 107 L223 302 Z" fill="#a0a3b3" />
      <path d="M170 263 L510 66 L552 84 L200 280 Z" fill="#8b8ea1" />
      <path d="M200 280 L550 84 L565 107 L223 302 Z" fill="url(#roll)" />
      <path d="M223 302 L565 107 C640 215 712 350 748 457 L402 650 C378 585 342 514 292 428 C272 392 250 345 223 302 Z" fill="url(#top)" />
      <path d="M128 272 C134 258 155 256 170 263 C190 270 210 285 223 302 C250 345 272 392 292 428 C342 514 378 585 402 650 V1265 C370 1300 345 1345 310 1370 C280 1388 245 1408 213 1413 C180 1408 145 1385 130 1355 L115 1172 L110 590 V480 Z" fill="#6d7078" />
      <path d="M402 1265 L748 1063 C725 1115 690 1160 635 1188 L310 1370 C350 1345 370 1300 402 1265 Z" fill="url(#under)" />
      <path d="M466 613 L686 487 V1105 L466 1230 Z" fill="#6e7179" />
      <path d="M466 985 L680 1105 L466 1230 Z" fill="url(#floor)" />
      <path d="M466 1033 L555 1081 L466 1130 Z" fill="#7b7e88" />
      <path d="M402 650 L466 613 V1230 L402 1265 Z" fill="#a1a4b1" />
      <path d="M402 650 L466 613 V637 L402 674 Z" fill="#c3c6d3" />
      <path d="M402 1250 L466 1217" />
      <path d="M686 487 L748 455 V1063 L686 1105 Z" fill="#a2a5b2" />
      <path d="M686 487 L748 455 V478 L686 512 Z" fill="#c3c6d3" />
      <path d="M686 1090 L748 1055" />
      <path d="M374 130 L386 121 L402 120 L388 128 Z" fill="#222" />
    </g>

    {/* front clamp */}
    <g {...edge}>
      <path d="M217 482 L291 440 L303 618 L230 660 Z" fill="#acafbd" />
      <path d="M132 435 L207 390 L291 440 L217 482 Z" fill="#9194a5" />
      <path d="M228 1240 L303 1205 L291 1360 L217 1402 Z" fill="#a0a3b0" />
      <path d="M230 660 L303 618 C335 640 365 700 371 765 C377 820 362 850 342 862 L268 903 L240 800 Z" fill="url(#lobeUpper)" />
      <path d="M268 903 L342 862 C336 910 336 960 343 1000 L268 1042 L250 980 Z" fill="#aaadba" />
      <path d="M268 1042 L343 1000 C362 1037 374 1072 374 1107 C376 1147 362 1172 345 1182 L228 1242 Z" fill="url(#lobeLower)" />
      <path
        d="M132 435 L217 482 L230 660 C260 695 296 770 298 830 C300 870 280 885 268 903 C261 950 261 1000 268 1042 C290 1080 302 1140 297 1185 C285 1225 255 1240 228 1240 L217 1402 L132 1355 L115 1172 C75 1120 50 1070 50 1000 C52 970 62 938 80 932 L82 800 C62 760 50 710 50 670 C54 630 80 600 118 597 Z"
        fill="#6e7178"
      />
    </g>
  </Model>
);

const ViewTriad = () => (
  <Triad viewBox="196 574 52 52" aria-hidden="true">
    <path d="M222 607V592" stroke="#2c8a34" strokeWidth="2" />
    <path d="m222 586 3 8h-6z" fill="#0f5a18" />
    <path d="m222 607 10 5" stroke="#b01212" strokeWidth="2" />
    <path d="m240 617-9-1 3-6z" fill="#a40c0c" />
    <path d="m222 607-10 5" stroke="#1313a8" strokeWidth="2" />
    <path d="m204 617 9-1-3-6z" fill="#0c0ca4" />
    <text x="220" y="583" fill="#5da865">Y</text>
    <text x="241" y="619" fill="#e0566b">X</text>
    <text x="199" y="619" fill="#3d3dd0">Z</text>
  </Triad>
);

/* ---------- bottom bars ---------- */

const ModelTabs = styled.nav`
  display: flex;
  height: 14px;
  padding-left: 35px;
  background: #f8f8f8;
  border-top: 1px solid #6c6c6c;
`;

const TabArrows = styled.div`
  display: flex;
  width: 54px;
  gap: 1px;
  padding: 1px;
  background: #8e8ea4;
`;

const TabArrow = styled.button<{ $dir: "left" | "right" }>`
  display: grid;
  place-items: center;
  flex: 1;
  background: #a6a6ba;
  &::before {
    content: "";
    border: 3px solid transparent;
    ${(p) => (p.$dir === "left" ? "border-right-color: #77778f; border-left: 0;" : "border-left-color: #77778f; border-right: 0;")}
  }
`;

const ModelTab = styled.button<{ $w: number; $active?: boolean }>`
  width: ${(p) => p.$w}px;
  line-height: 12px;
  font-weight: ${(p) => (p.$active ? 700 : 400)};
  color: ${(p) => (p.$active ? "#000" : "#333")};
  background: ${(p) => (p.$active ? "#fff" : "#d2d2d2")};
  border-right: 1px solid #b0b0b0;
`;

const StatusBar = styled.div`
  display: flex;
  align-items: center;
  height: 14px;
  padding: 0 3px 0 1px;
  background: #f6f6f6;
  border-top: 1px solid #c4c4c4;
  color: #111;
`;

const StatusUnits = styled.button`
  display: flex;
  align-items: center;
  gap: 17px;
  margin-left: auto;
  margin-right: 17px;
`;

const Taskbar = styled.footer`
  display: grid;
  grid-template-columns: 1fr auto 1fr;
  align-items: center;
  height: 40px;
  color: #f2f2f2;
  background: linear-gradient(to right, #38241a, #29261c 8%, #29261c 92%, #3e2116);
`;

const Weather = styled.button`
  display: flex;
  align-items: center;
  gap: 8px;
  padding-left: 19px;
  text-align: left;
  line-height: 13px;
  small { display: block; font-size: 10px; color: #c9c7c2; }
`;

const Sun = styled.span`
  width: 16px;
  height: 16px;
  border-radius: 50%;
  background: linear-gradient(#f7b733, #ee7a1c);
`;

const Apps = styled.nav`
  display: flex;
  align-items: center;
  justify-content: space-between;
  width: 698px;
`;

const AppButton = styled.button<{ $active?: boolean; $running?: boolean }>`
  position: relative;
  display: grid;
  place-items: center;
  width: 34px;
  height: 34px;
  border-radius: 4px;
  background: ${(p) => (p.$active ? "#3d3a30" : "none")};
  ${(p) =>
    (p.$active || p.$running) &&
    css`
      &::after {
        content: "";
        position: absolute;
        bottom: 0;
        width: ${p.$active ? 14 : 6}px;
        height: 3px;
        border-radius: 2px;
        background: #a9a7a2;
      }
    `}
`;

const Disc = styled.span<{ $bg: string }>`
  display: grid;
  place-items: center;
  width: 20px;
  height: 20px;
  border-radius: 50%;
  background: ${(p) => p.$bg};
`;

const PlayBacking = styled.span`
  display: grid;
  place-items: center;
  background: linear-gradient(#fff, #fff) center / 8px 8px no-repeat;
`;

const TaskSearch = styled.label`
  display: flex;
  align-items: center;
  gap: 9px;
  width: 183px;
  height: 27px;
  margin-right: 2px;
  padding: 0 6px 0 10px;
  border-radius: 14px;
  background: #45423a;
  border: 1px solid #504d45;
  input { flex: 1; min-width: 0; outline: 0; font-size: 11px; }
  input::placeholder { color: #d6d4ce; opacity: 1; }
`;

const Badge = styled.span<{ $bg: string }>`
  position: absolute;
  top: 3px;
  right: 2px;
  width: 13px;
  height: 13px;
  border-radius: 50%;
  background: ${(p) => p.$bg};
  color: #222;
  font-size: 9px;
  line-height: 13px;
`;

const SwText = styled.svg`
  position: absolute;
  inset: 7px;
  width: 20px;
  height: 20px;
  font: 900 10px "Roboto", sans-serif;
`;

const Tray = styled.div`
  display: flex;
  align-items: center;
  justify-content: flex-end;
  gap: 6px;
  padding-right: 17px;
`;

const Language = styled.button`
  width: 28px;
  margin: 0 5px 0 5px;
  line-height: 13px;
`;

const Clock = styled.time`
  display: block;
  width: 60px;
  text-align: right;
  line-height: 13px;
`;

const Highlights = () => (
  <svg width="36" height="18" viewBox="0 0 36 18" aria-hidden="true">
    <path d="M3 16 12 3" stroke="#e8387f" strokeWidth="5" strokeLinecap="round" />
    <path d="M5 13l2-3" stroke="#5fbf4b" strokeWidth="4" />
    <path d="M8 9l2-3" stroke="#f5c63c" strokeWidth="4" />
    <path d="M13 17c0-6 3-10 7-12" stroke="#7f8595" strokeWidth="4" fill="none" strokeDasharray="3 1" />
    <path d="M21 14V6c0-5 10-5 11 0l1 8z" fill="#c8443a" />
    <path d="M25 3v10M29 3v10" stroke="#7d2824" strokeWidth="2" />
    <path d="M33 5l2 10" stroke="#8a90a3" strokeWidth="2" />
  </svg>
);

const App = () => {
  const [modelTab, setModelTab] = useState("Model");
  return (
    <Page>
      <GlobalStyle />
      <TitleBar>
        <TitleLeft>
          <Brand>
            <DassaultMark />
            <span><b>SOLID</b>WORKS</span>
            <BrandArrow />
          </Brand>
          <QuickTools>
            {quickTools.map((t) => (
              <Tool key={t.label} $w={t.w} $active={t.active} aria-label={t.label}>
                <Icon name={t.icon} size={13} />
                {t.caret && <Caret $color={t.caret === "pale" ? "#aaa" : "#444"} />}
              </Tool>
            ))}
          </QuickTools>
        </TitleLeft>
        <DocTitle>Brake_drum[1] [Read-only]</DocTitle>
        <TitleRight>
          <SearchBox>
            <Icon name="terminal" size={12} />
            <input aria-label="Search commands" placeholder="Search Commands" />
            <Icon name="search" size={11} />
            <Caret />
          </SearchBox>
          <IconButton aria-label="Account"><Icon name="user" size={13} /></IconButton>
          <IconButton $gap={14} aria-label="Help"><Icon name="help" size={13} /></IconButton>
          <IconButton $gap={16} aria-label="Minimize"><Icon name="minimize" size={11} /></IconButton>
          <IconButton $gap={16} aria-label="Restore"><Icon name="restore" size={12} /></IconButton>
          <IconButton $gap={16} aria-label="Close"><Icon name="close" size={9} /></IconButton>
        </TitleRight>
      </TitleBar>

      <Workspace>
        <CommandRow>
          <CommandTabs>
            {commandTabs.map(([name, w]) => <CommandTab key={name} $w={w}>{name}</CommandTab>)}
          </CommandTabs>
          <ViewTools>
            {viewTools.map(([icon, w, caret, label]) => (
              <ViewTool key={label} $w={w} aria-label={label}>
                <Icon name={icon} size={13} />
                {caret && <Caret $color="#8a8f98" />}
              </ViewTool>
            ))}
          </ViewTools>
          <DocControls>
            <IconButton aria-label="Dock left"><Icon name="dockLeft" size={10} /></IconButton>
            <IconButton aria-label="Dock right"><Icon name="dockRight" size={10} /></IconButton>
            <IconButton aria-label="Minimize document"><Icon name="minimize" size={10} /></IconButton>
            <IconButton aria-label="Restore document"><Icon name="restore" size={11} /></IconButton>
            <IconButton aria-label="Close document"><Icon name="close" size={8} /></IconButton>
          </DocControls>
        </CommandRow>

        <WorkRow>
          <SideColumn>
            <SideTools>
              {sideTools.map((name) => (
                <SideTool key={name} aria-label={name}>
                  <Icon name={name} size={13} />
                  {name === "mirrorFeat" && <Caret />}
                </SideTool>
              ))}
            </SideTools>
          </SideColumn>

          <FeaturePanel>
            <Grip />
            <PanelTabs>
              <PanelTab $active aria-label="Feature tree"><Icon name="part" size={13} /></PanelTab>
              <PanelTab aria-label="Properties"><Icon name="list" size={13} /></PanelTab>
              <PanelTab aria-label="Configurations"><Icon name="tree" size={12} /></PanelTab>
              <PanelTab aria-label="Dimensions"><Icon name="target" size={12} /></PanelTab>
              <PanelTab aria-label="Appearances"><Icon name="ball" size={13} /></PanelTab>
              <MoreTabs aria-label="More tabs">
                <svg width="6" height="9" viewBox="0 0 6 9" fill="none" stroke="currentColor" strokeWidth="1.500" aria-hidden="true">
                  <path d="m1 1 3.500 3.500L1 8" />
                </svg>
              </MoreTabs>
            </PanelTabs>
            <FilterBox>
              <Icon name="filter" size={13} />
              <input aria-label="Filter features" />
            </FilterBox>
            <Tree>
              <Row $root>
                <Icon name="part" size={12} />
                Brake_drum[1] (Default) &lt;&lt;De
              </Row>
              {features.map(([name, icon, expandable]) => (
                <Row key={name}>
                  <Expander $hidden={!expandable} aria-label={`Expand ${name}`} />
                  <Icon name={icon} size={12} />
                  {name}
                </Row>
              ))}
            </Tree>
            <PanelScroll />
          </FeaturePanel>

          <Canvas>
            <BrakeDrum />
            <ViewTriad />
            <ViewName>*Isometric</ViewName>
            <PanelHandle aria-label="Collapse panel" />
            <TaskPane>
              <PaneTab $active aria-label="Resources"><Icon name="home" size={13} /></PaneTab>
              <PaneTab aria-label="Design library"><Icon name="library" size={13} /></PaneTab>
              <PaneTab aria-label="File explorer"><Icon name="folder" size={13} /></PaneTab>
              <PaneTab aria-label="View palette"><Icon name="palette" size={12} /></PaneTab>
              <PaneTab aria-label="Scenes"><Icon name="ball" size={12} /></PaneTab>
              <PaneTab aria-label="Custom properties"><Icon name="list" size={12} /></PaneTab>
              <PaneTab aria-label="Forum"><Icon name="forum" size={13} /></PaneTab>
            </TaskPane>
          </Canvas>
        </WorkRow>
      </Workspace>

      <ModelTabs>
        <TabArrows>
          <TabArrow $dir="left" aria-label="First tab" />
          <TabArrow $dir="left" aria-label="Previous tab" />
          <TabArrow $dir="right" aria-label="Next tab" />
          <TabArrow $dir="right" aria-label="Last tab" />
        </TabArrows>
        {([["Model", 51], ["3D Views", 60], ["Motion Study 1", 95]] as [string, number][]).map(([name, w]) => (
          <ModelTab key={name} $w={w} $active={modelTab === name} onClick={() => setModelTab(name)}>{name}</ModelTab>
        ))}
      </ModelTabs>
      <StatusBar>
        SOLIDWORKS Premium 2022 SP1.0
        <StatusUnits>MMGS <Caret $up /></StatusUnits>
        <Icon name="tag" size={10} />
      </StatusBar>

      <Taskbar>
        <Weather>
          <Sun />
          <span>29°C<small>Sunny</small></span>
        </Weather>
        <Apps>
          <AppButton aria-label="Start"><Icon name="start" size={20} /></AppButton>
          <TaskSearch>
            <Icon name="search" size={12} />
            <input aria-label="Search" placeholder="Search" />
            <Highlights />
          </TaskSearch>
          <AppButton aria-label="Task view"><Icon name="taskview" size={20} /></AppButton>
          <AppButton aria-label="Chat"><Icon name="chat" size={19} /></AppButton>
          <AppButton aria-label="File Explorer"><Icon name="explorer" size={20} /></AppButton>
          <AppButton aria-label="Edge"><Icon name="edge" size={20} /></AppButton>
          <AppButton aria-label="Store"><Icon name="store" size={19} /><Badge $bg="#9b9892">1</Badge></AppButton>
          <AppButton aria-label="Diamond"><Icon name="diamond" size={20} /></AppButton>
          <AppButton aria-label="Quick Assist"><Icon name="quick" size={20} /><Badge $bg="#fdbd10" /></AppButton>
          <AppButton aria-label="McAfee"><Icon name="mcafee" size={20} /></AppButton>
          <AppButton aria-label="Facebook">
            <Disc $bg="#fff"><FaFacebook size={21} color="#1b7df0" /></Disc>
          </AppButton>
          <AppButton aria-label="YouTube">
            <PlayBacking><FaYoutube size={21} color="#f50a0a" /></PlayBacking>
          </AppButton>
          <AppButton $running aria-label="Spotify"><FaSpotify size={20} color="#1ed760" /></AppButton>
          <AppButton $running aria-label="WhatsApp">
            <Disc $bg="#3fc95a"><FaWhatsapp size={20} color="#fff" /></Disc>
          </AppButton>
          <AppButton $active aria-label="SOLIDWORKS 2022">
            <Icon name="solidworks" size={20} />
            <SwText viewBox="0 0 20 20" fill="#fff">
              <text x="2" y="13">S</text>
              <text x="9" y="14">W</text>
              <text x="9" y="20" fontSize="5">2022</text>
            </SwText>
          </AppButton>
        </Apps>
        <Tray>
          <IconButton aria-label="Show hidden icons"><Icon name="chevronUp" size={14} /></IconButton>
          <IconButton $gap={6} aria-label="OneDrive"><Icon name="cloud" size={14} /></IconButton>
          <Language>ENG<br />IN</Language>
          <IconButton aria-label="Network"><Icon name="wifi" size={14} /></IconButton>
          <IconButton aria-label="Volume"><Icon name="volume" size={14} /></IconButton>
          <IconButton aria-label="Battery"><Icon name="battery" size={13} /></IconButton>
          <Clock>11:59<br />21-10-2023</Clock>
          <IconButton aria-label="Notifications"><Icon name="bell" size={12} /></IconButton>
        </Tray>
      </Taskbar>
    </Page>
  );
};

export default App;
